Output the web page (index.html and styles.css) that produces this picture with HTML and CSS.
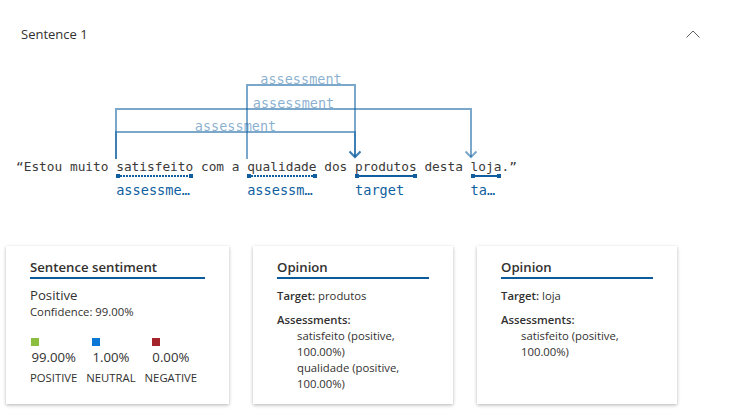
FILE: index.html
```html
<!DOCTYPE html>
<html lang="pt">
<head>
<meta charset="utf-8">
<title>Sentence 1</title>
<link rel="stylesheet" href="styles.css">
</head>
<body>
<div class="header">
  <span class="header-title">Sentence 1</span>
  <svg class="chevron" width="14" height="8" viewBox="0 0 14 8"><polyline points="0.5,7.5 7,1 13.5,7.5" fill="none" stroke="#605e5c" stroke-width="1"/></svg>
</div>
<div class="diagram">
  <svg class="arcs" width="729" height="92" viewBox="0 67 729 92">
    <g fill="none" stroke="rgba(15,95,160,0.55)" stroke-width="2">
      <path d="M116,159 V132 H355 V157"/>
      <path d="M116,159 V109 H471 V157"/>
      <path d="M247,159 V85 H355 V157"/>
      <polyline points="349.5,151.5 355,157 360.5,151.5"/>
      <polyline points="349.5,151.5 355,157 360.5,151.5"/>
      <polyline points="465.5,151.5 471,157 476.5,151.5"/>
    </g>
    <g class="arc-labels" text-anchor="middle">
      <text x="301" y="84">assessment</text>
      <text x="293.5" y="108">assessment</text>
      <text x="235.5" y="131">assessment</text>
    </g>
  </svg>
  <div class="sentence">“Estou muito <span class="tok"><span class="w">satisfeito</span><span class="ul"><span class="cap"></span><span class="line dotted"></span><span class="cap"></span></span><span class="lbl">assessment</span></span> com a <span class="tok"><span class="w">qualidade</span><span class="ul"><span class="cap"></span><span class="line dotted"></span><span class="cap"></span></span><span class="lbl">assessment</span></span> dos <span class="tok"><span class="w">produtos</span><span class="ul"><span class="cap"></span><span class="line"></span><span class="cap"></span></span><span class="lbl">target</span></span> desta <span class="tok"><span class="w">loja</span><span class="ul"><span class="cap"></span><span class="line"></span><span class="cap"></span></span><span class="lbl">target</span></span>.”</div>
</div>
<div class="cards">
  <div class="card card-wide">
    <div class="card-title">Sentence sentiment</div>
    <div class="sent-label">Positive</div>
    <div class="confidence">Confidence: 99.00%</div>
    <div class="scores">
      <div class="score">
        <div class="score-val"><span class="sq sq-pos"></span><span class="pct">99.00%</span></div>
        <div class="score-name">POSITIVE</div>
      </div>
      <div class="score">
        <div class="score-val"><span class="sq sq-neu"></span><span class="pct">1.00%</span></div>
        <div class="score-name">NEUTRAL</div>
      </div>
      <div class="score">
        <div class="score-val"><span class="sq sq-neg"></span><span class="pct">0.00%</span></div>
        <div class="score-name">NEGATIVE</div>
      </div>
    </div>
  </div>
  <div class="card">
    <div class="card-title">Opinion</div>
    <div class="target"><b>Target:</b> produtos</div>
    <div class="assess-head"><b>Assessments:</b></div>
    <div class="assess-item">satisfeito (positive, 100.00%)</div>
    <div class="assess-item">qualidade (positive, 100.00%)</div>
  </div>
  <div class="card">
    <div class="card-title">Opinion</div>
    <div class="target"><b>Target:</b> loja</div>
    <div class="assess-head"><b>Assessments:</b></div>
    <div class="assess-item">satisfeito (positive, 100.00%)</div>
  </div>
</div>
</body>
</html>
```
FILE: styles.css
```css
* { box-sizing: border-box; }
html, body { height: 416px; overflow: hidden; }
body {
  margin: 0;
  background: #ffffff;
  color: #323130;
  font-family: "Open Sans", "Noto Sans", sans-serif;
}
.header {
  height: 67px;
  display: flex;
  align-items: center;
  justify-content: space-between;
  padding: 0 29px 0 21px;
}
.header-title {
  font-size: 13px;
  color: #323130;
}
.chevron { display: block; }
.diagram { height: 179px; }
.arcs { display: block; }
.arc-labels text {
  font-family: "DejaVu Sans Mono", monospace;
  font-size: 13.5px;
  fill: rgba(15, 95, 160, 0.5);
}
.sentence {
  padding-left: 16px;
  font-family: "DejaVu Sans Mono", monospace;
  font-size: 12.8px;
  line-height: 16px;
  color: #3b3a39;
  white-space: pre;
}
.tok {
  display: inline-block;
  vertical-align: top;
}
.w { display: block; }
.ul {
  display: flex;
  align-items: center;
  height: 4px;
  margin-top: -1px;
}
.cap {
  width: 4px;
  height: 4px;
  background: #0f5fa0;
  flex: none;
}
.line {
  flex: 1;
  height: 2px;
  background: #0f5fa0;
}
.line.dotted {
  background: repeating-linear-gradient(to right, #0f5fa0 0 2px, transparent 2px 3px);
}
.lbl {
  display: block;
  width: 0;
  min-width: 100%;
  margin-top: 4px;
  font-size: 13.6px;
  line-height: 17px;
  color: #0f5fa0;
  overflow: hidden;
  text-overflow: ellipsis;
  white-space: nowrap;
}
.cards {
  display: flex;
  align-items: flex-start;
  gap: 24px;
  padding: 0 6px;
}
.card {
  flex: none;
  width: 200px;
  height: 158px;
  padding: 12px 24px;
  background: #fff;
  box-shadow: 0 1px 3px rgba(0,0,0,0.22), 0 2px 5px rgba(0,0,0,0.08);
}
.card-wide { width: 223px; }
.card-title {
  font-size: 13.2px;
  font-weight: 600;
  line-height: 19px;
  border-bottom: 2px solid #0a5a9c;
}
.sent-label {
  margin-top: 7px;
  font-size: 13.2px;
  line-height: 18px;
}
.confidence {
  font-size: 11.3px;
  line-height: 16px;
}
.scores {
  display: flex;
  gap: 9px;
  margin-top: 18px;
}
.score {
  display: flex;
  flex-direction: column;
  align-items: center;
}
.score-val { display: flex; flex-direction: column; align-items: flex-start; }
.sq { width: 8px; height: 8px; margin-bottom: 2px; }
.sq-pos { background: #8cbf3f; }
.sq-neu { background: #0a78d4; }
.sq-neg { background: #a4262c; }
.pct { font-size: 13.2px; line-height: 18px; }
.score-name {
  margin-top: 4px;
  font-size: 11.3px;
  line-height: 16px;
}
.target {
  margin-top: 9px;
  font-size: 11.3px;
  line-height: 16px;
}
.target b, .assess-head b { font-weight: 600; }
.assess-head {
  margin-top: 8px;
  font-size: 11.3px;
  line-height: 16px;
}
.assess-item {
  padding-left: 20px;
  font-size: 11.3px;
  line-height: 16px;
}
```
